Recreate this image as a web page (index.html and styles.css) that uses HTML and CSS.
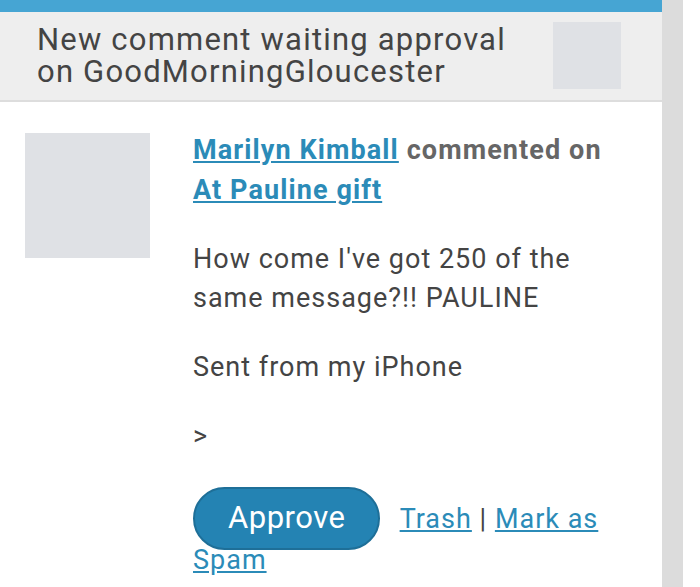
FILE: index.html
```html
<!DOCTYPE html>
<html lang="en">
<head>
    <meta charset="UTF-8">
    <meta name="viewport" content="width=device-width, initial-scale=1.0">
    <title>New comment waiting approval</title>
    <link rel="stylesheet" href="styles.css">
</head>
<body>
    <div class="page">
        <div class="card">
            <div class="header">
                <h1>New comment waiting approval on GoodMorningGloucester</h1>
                <div class="site-icon"></div>
            </div>

            <div class="comment">
                <div class="avatar"></div>
                <div class="comment-body">
                    <p class="title"><a href="#">Marilyn Kimball</a> commented on <a href="#">At Pauline gift</a></p>
                    <p>How come I've got 250 of the same message?!! PAULINE</p>
                    <p>Sent from my iPhone</p>
                    <p>&gt;</p>
                    <div class="actions">
                        <a href="#" class="btn">Approve</a> <a href="#">Trash</a> | <a href="#">Mark as</a> <a href="#">Spam</a>
                    </div>
                </div>
            </div>
        </div>
        <div class="scroll-strip"></div>
    </div>
</body>
</html>
```

FILE: styles.css
```css
body {
    margin: 0;
    font-family: Roboto, "Noto Sans", Arial, sans-serif;
    background-color: white;
    color: #444;
}
.page {
    display: flex;
    height: 587px;
    overflow: hidden;
}
.card {
    width: 662px;
    flex-shrink: 0;
    border-top: 12px solid #46a5d3;
    background-color: white;
}
.scroll-strip {
    width: 21px;
    background-color: #dcdcdc;
}
.header {
    display: flex;
    justify-content: space-between;
    align-items: flex-start;
    background-color: #eeeeee;
    border-bottom: 2px solid #dddddd;
    padding: 10px 41px 9px 37px;
    height: 69px;
}
.header h1 {
    margin: 0;
    width: 490px;
    font-size: 31px;
    font-weight: normal;
    letter-spacing: 1.2px;
    line-height: 32px;
    color: #444;
    padding-top: 2px;
}
.site-icon {
    width: 68px;
    height: 67px;
    background-color: #dfe1e5;
}
.comment {
    display: flex;
    padding: 31px 20px 0 25px;
}
.avatar {
    width: 125px;
    height: 125px;
    flex-shrink: 0;
    background-color: #dfe1e5;
    margin-right: 43px;
}
.comment-body {
    width: 420px;
    font-size: 27px;
    letter-spacing: 1px;
    line-height: 39px;
}
.comment-body p {
    margin: 0 0 30px;
}
.comment-body .title {
    font-weight: bold;
    color: #666;
    letter-spacing: 1.1px;
    line-height: 40px;
    margin-top: -3px;
}
a {
    color: #2b8bb8;
}
.actions {
    line-height: 41px;
    margin-top: 43px;
}
.btn {
    display: inline-block;
    background-color: #2483b3;
    border: 2px solid #1e6f98;
    color: white;
    text-decoration: none;
    font-size: 31px;
    letter-spacing: 0.5px;
    line-height: 36px;
    padding: 11px 33px 12px;
    border-radius: 32px;
    margin: -12px 12px -12px 0;
}
```
